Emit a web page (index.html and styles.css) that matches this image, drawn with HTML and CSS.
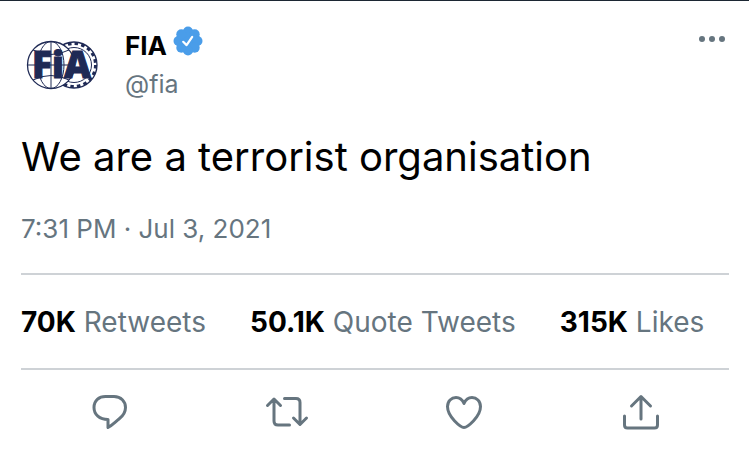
FILE: index.html
```html
<!DOCTYPE html>
<html lang="en">
<head>
    <meta charset="UTF-8">
    <meta name="viewport" content="width=device-width, initial-scale=1.0">
    <title>FIA (@fia)</title>
    <link rel="stylesheet" href="styles.css">
</head>
<body>
    <article class="tweet">
        <header class="header">
            <svg class="avatar" viewBox="0 0 76 52" aria-hidden="true">
                <!-- gear wheel -->
                <g fill="none" stroke="#1f2a55">
                    <circle cx="49" cy="26" r="23" stroke-width="1.3"/>
                    <circle cx="49" cy="26" r="21.5" stroke-width="3" stroke-dasharray="3.6 3.15"/>
                    <circle cx="49" cy="26" r="17.5" stroke-width="1"/>
                </g>
                <!-- globe -->
                <g fill="none" stroke="#1f2a55" stroke-width="1">
                    <circle cx="26" cy="26" r="23.5" fill="#fff" stroke-width="1.3"/>
                    <ellipse cx="26" cy="26" rx="13" ry="23.5"/>
                    <path d="M26 2.5v47M2.5 26h47M8 11q18 9 36 0M8 41q18-9 36 0"/>
                </g>
                <text class="avatar-text" x="7" y="39">FiA</text>
            </svg>
            <div class="author">
                <div class="name-row">
                    <a class="name" href="#">FIA</a>
                    <svg class="verified" viewBox="0 0 30 30" role="img" aria-label="Verified">
                        <g fill="#4a9de9">
                            <circle cx="15" cy="15" r="12"/>
                            <circle cx="15" cy="5.5" r="5"/>
                            <circle cx="21.7" cy="8.3" r="5"/>
                            <circle cx="24.5" cy="15" r="5"/>
                            <circle cx="21.7" cy="21.7" r="5"/>
                            <circle cx="15" cy="24.5" r="5"/>
                            <circle cx="8.3" cy="21.7" r="5"/>
                            <circle cx="5.5" cy="15" r="5"/>
                            <circle cx="8.3" cy="8.3" r="5"/>
                        </g>
                        <path d="M10.2 15.8l3.4 3.3 5.6-8.3" fill="none" stroke="#fff" stroke-width="2.2" stroke-linecap="round" stroke-linejoin="round"/>
                    </svg>
                </div>
                <a class="handle" href="#">@fia</a>
            </div>
            <button class="more" type="button" aria-label="More">
                <svg viewBox="0 0 28 8" fill="#66757f">
                    <circle cx="4" cy="4" r="3"/>
                    <circle cx="14" cy="4" r="3"/>
                    <circle cx="24" cy="4" r="3"/>
                </svg>
            </button>
        </header>

        <p class="text">We are a terrorist organisation</p>
        <p class="date">7:31 PM · Jul 3, 2021</p>

        <div class="stats">
            <a href="#"><strong>70K</strong> Retweets</a>
            <a href="#"><strong>50.1K</strong> Quote Tweets</a>
            <a href="#"><strong>315K</strong> Likes</a>
        </div>

        <div class="actions">
            <button type="button" aria-label="Reply">
                <svg viewBox="0 0 44 40">
                    <path d="M17.500 4.500h8.500c7 0 11.500 5 11.500 11 0 5-2.500 8.500-6.500 11.500-3.500 2.700-6.500 6-11 8.500v-8c-8.500 0-14-5-14-12s5-11 11.500-11z"/>
                </svg>
            </button>
            <button type="button" aria-label="Retweet">
                <svg viewBox="0 0 44 40">
                    <path d="M2.500 13.500L9 7l6.500 6.500M9 7.500V29q0 4 4 4h11.500M19.500 6.500H31q4 0 4 4V32M28.500 26l6.500 6.500 6.500-6.500"/>
                </svg>
            </button>
            <button type="button" aria-label="Like">
                <svg viewBox="0 0 44 40">
                    <path d="M22 35.500C19 35.500 5.500 25 5.500 14.500 5.500 9 9.500 5.500 14 5.500c4 0 6.500 2.500 8 6 1.500-3.500 4-6 8-6 4.500 0 8.500 3.500 8.500 9C38.500 25 25 35.500 22 35.500z"/>
                </svg>
            </button>
            <button type="button" aria-label="Share">
                <svg viewBox="0 0 44 40">
                    <path d="M12.500 14L22 4.500l9.500 9.500M22 5v22M5.500 24v9q0 3 3 3h27q3 0 3-3v-9"/>
                </svg>
            </button>
        </div>
    </article>
</body>
</html>
```

FILE: styles.css
```css
* {
    box-sizing: border-box;
}
body {
    margin: 0;
    font-family: Inter, "Liberation Sans", sans-serif;
    background-color: #fff;
    border-top: 1px solid #1c2733;
}
a {
    color: inherit;
    text-decoration: none;
}
button {
    padding: 0;
    border: none;
    background: none;
    cursor: pointer;
}
.tweet {
    padding: 24px 20px 24px 21px;
}
.header {
    display: flex;
    align-items: flex-start;
}
.avatar {
    width: 76px;
    height: 52px;
    margin: 14px 24px 0 4px;
}
.avatar-text {
    font-family: "Open Sans", "Liberation Sans", sans-serif;
    font-size: 37px;
    font-weight: 800;
    fill: #1f2a55;
    stroke: #1f2a55;
    stroke-width: 1;
}
.author {
    flex: 1;
    color: #66757f;
}
.name-row {
    display: flex;
    align-items: center;
    gap: 6px;
    height: 40px;
}
.name {
    font-size: 26px;
    font-weight: 700;
    color: #000;
}
.verified {
    width: 30px;
    height: 30px;
    margin-bottom: 8px;
}
.handle {
    display: block;
    font-size: 25px;
    line-height: 38px;
}
.more {
    margin: 10px 3px 0 0;
}
.more svg {
    display: block;
    width: 28px;
    height: 8px;
}
.text {
    margin: 30px 0 0;
    font-size: 40px;
    line-height: 48px;
    color: #000;
}
.date {
    margin: 32px 0 28px;
    font-size: 26px;
    line-height: 32px;
    color: #66757f;
}
.stats {
    display: flex;
    gap: 44px;
    padding: 31px 0 29px;
    border-top: 2px solid #ced2d6;
    border-bottom: 2px solid #ced2d6;
    font-size: 28px;
    line-height: 33px;
    color: #66757f;
    white-space: nowrap;
}
.stats strong {
    font-weight: 700;
    color: #000;
}
.actions {
    display: grid;
    grid-template-columns: repeat(4, 1fr);
    padding-top: 22px;
}
.actions button {
    display: flex;
    justify-content: center;
}
.actions svg {
    width: 44px;
    height: 40px;
    fill: none;
    stroke: #66757f;
    stroke-width: 3;
    stroke-linecap: round;
    stroke-linejoin: round;
}
```
